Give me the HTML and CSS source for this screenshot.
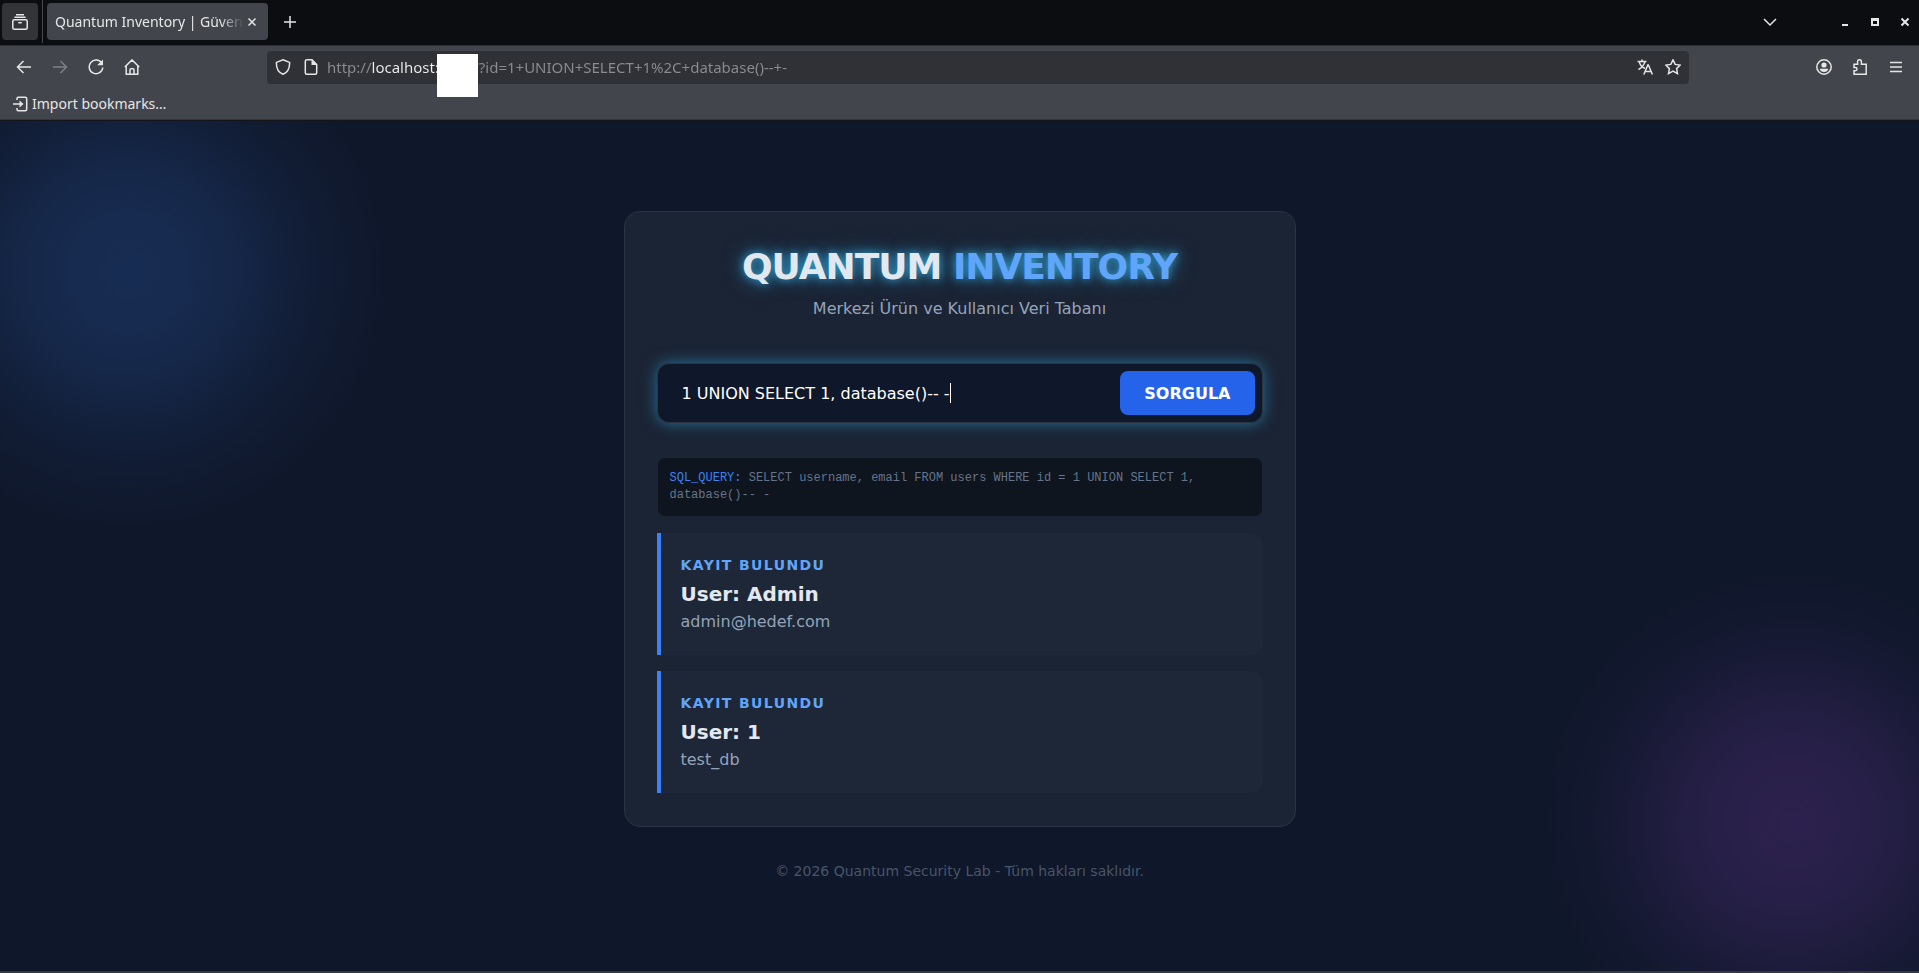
FILE: index.html
```html
<!DOCTYPE html>
<html lang="tr">
<head>
<meta charset="utf-8">
<meta name="viewport" content="width=device-width, initial-scale=1">
<title>Quantum Inventory | Güvenli</title>
<link rel="stylesheet" href="styles.css">
</head>
<body>
<div class="window">
  <header class="browser">
    <div class="tabstrip">
      <button class="recent" aria-label="Recent browsing">
        <svg class="icon" viewBox="0 0 16 16"><path d="M4 .8h8M2.4 3.3h11.2"/><rect x=".8" y="5.8" width="14.4" height="9.4" rx="1.5"/><path d="M6.2 8.7h3.6"/></svg>
      </button>
      <span class="divider"></span>
      <div class="tab">
        <span class="tab-title">Quantum Inventory | Güvenli</span>
        <button class="tab-close" aria-label="Close tab"><svg viewBox="0 0 10 10"><path d="M1.5 1.5l7 7M8.5 1.5l-7 7"/></svg></button>
      </div>
      <button class="icon-button new-tab" aria-label="New tab"><svg class="icon" viewBox="0 0 16 16"><path d="M8 2v12M2 8h12"/></svg></button>
      <div class="window-controls">
        <button class="icon-button tabs-menu" aria-label="List all tabs"><svg class="icon" viewBox="0 0 16 16"><path d="M2 5l6 6 6-6"/></svg></button>
        <button class="control" aria-label="Minimize"><svg viewBox="0 0 10 10"><path class="solid" d="M2 7h6v2H2z"/></svg></button>
        <button class="control" aria-label="Maximize"><svg viewBox="0 0 10 10"><path class="solid" fill-rule="evenodd" d="M1 1h8v8H1zM3 4v3h4V4z"/></svg></button>
        <button class="control" aria-label="Close"><svg viewBox="0 0 10 10"><path d="M1.5 1.5l7 7M8.5 1.5l-7 7"/></svg></button>
      </div>
    </div>
    <div class="toolbar">
      <nav class="nav-buttons" aria-label="Navigation">
        <button class="icon-button" aria-label="Back"><svg class="icon" viewBox="0 0 16 16"><path d="M15 8H1.5M7.5 2L1.5 8l6 6"/></svg></button>
        <button class="icon-button" aria-label="Forward" disabled><svg class="icon" viewBox="0 0 16 16"><path d="M1 8h13.5M8.500 2l6 6-6 6"/></svg></button>
        <button class="icon-button" aria-label="Reload"><svg class="icon" viewBox="0 0 16 16"><path d="M13.800 4.300A6.800 6.800 0 1 0 14.800 8.500"/><path class="solid" d="M15 .5v5.800H9.200z"/></svg></button>
        <button class="icon-button" aria-label="Home"><svg class="icon" viewBox="0 0 16 16"><path d="M.8 8L8 .9 15.200 8M2.200 7v8.200h11.600V7M6 15v-4.200q0-1 1-1h2q1 0 1 1V15"/></svg></button>
      </nav>
      <div class="address">
        <svg class="icon" viewBox="0 0 16 16"><path d="M8 .8l6.600 2.600C14.800 9 13 13.200 8 15.300 3 13.200 1.200 9 1.400 3.400z"/></svg>
        <svg class="icon" viewBox="0 0 16 16"><path d="M3.300.8h5.700l4.700 4.700v8.200q0 1.500-1.500 1.500H3.800q-1.500 0-1.500-1.500V2.300Q2.300.8 3.800.8z"/><path class="solid" d="M8.500 1v5H14z"/></svg>
        <div class="url">
          <input class="url-input" type="text" aria-label="Address" spellcheck="false" value="http://localhost:&#8199;&#8199;&#8199;&#8199;/?id=1+UNION+SELECT+1%2C+database()--+-">
          <span class="redaction"></span>
        </div>
        <svg class="icon" viewBox="0 0 16 16"><path d="M.5 2.500h9M5 .5v2M2.300 2.800C3 6 6 8.500 8 9.500M7.800 2.800C7 6.500 4 9 1.500 10.500M6.800 15.500l4-9.500h.6l4 9.500M8 12.500h6"/></svg>
        <svg class="icon" viewBox="0 0 16 16"><path d="M8 .9l2.200 4.500 5 .7-3.600 3.500.9 5L8 12.200l-4.500 2.400.9-5L.8 6.100l5-.7z"/></svg>
      </div>
      <div class="tools">
        <button class="icon-button" aria-label="Account"><svg class="icon" viewBox="0 0 16 16"><circle cx="8" cy="8" r="7.200"/><circle class="solid" cx="8" cy="6" r="2.600"/><path class="solid" d="M3.700 9.700h8.600c-.3 2-2 3.300-4.300 3.300s-4-1.300-4.300-3.300z"/></svg></button>
        <button class="icon-button" aria-label="Extensions"><svg class="icon" viewBox="0 0 16 16"><path d="M2 5.200h3.600V2.600a1.900 1.900 0 0 1 3.800 0v2.600h4.800v10H2v-3.400h1.300a1.700 1.700 0 0 0 0-3.400H2z"/></svg></button>
        <button class="icon-button" aria-label="Menu"><svg class="icon" viewBox="0 0 16 16"><path d="M2 3.500h12M2 8h12M2 12.500h12"/></svg></button>
      </div>
    </div>
    <div class="bookmarks">
      <button class="bookmark"><svg class="bookmark-icon" viewBox="0 0 16 16"><path d="M5 4V2.500Q5 1.300 6.200 1.300h7Q14.700 1.300 14.700 2.800v10.400q0 1.500-1.500 1.500h-7Q5 14.700 5 13.500V12M1 8h9"/><path class="solid" d="M7.500 4.500L11.500 8l-4 3.500z"/></svg>Import bookmarks…</button>
    </div>
  </header>

  <main class="page">
    <section class="card">
      <header class="hero">
        <h1 class="title">QUANTUM <span class="accent">INVENTORY</span></h1>
        <p class="subtitle">Merkezi Ürün ve Kullanıcı Veri Tabanı</p>
      </header>
      <form class="search">
        <input class="search-input" type="text" name="id" aria-label="ID" value="1 UNION SELECT 1, database()-- -">
        <button class="search-button" type="button">SORGULA</button>
      </form>
      <p class="query"><span class="query-label">SQL_QUERY:</span> SELECT username, email FROM users WHERE id = 1 UNION SELECT 1, database()-- -</p>
      <div class="records">
        <article class="record">
          <p class="record-label">KAYIT BULUNDU</p>
          <h2 class="record-name">User: Admin</h2>
          <p class="record-detail">admin@hedef.com</p>
        </article>
        <article class="record">
          <p class="record-label">KAYIT BULUNDU</p>
          <h2 class="record-name">User: 1</h2>
          <p class="record-detail">test_db</p>
        </article>
      </div>
    </section>
    <footer class="footer">© 2026 Quantum Security Lab - Tüm hakları saklıdır.</footer>
  </main>
</div>
</body>
</html>
```

FILE: styles.css
```css
*, *::before, *::after { box-sizing: border-box; }

body {
  margin: 0;
  background: #0f172a;
  font-family: "DejaVu Sans", sans-serif;
}

h1, h2, p { margin: 0; }

button, input {
  font: inherit;
  color: inherit;
  border: 0;
  padding: 0;
  background: none;
  outline: none;
}

svg {
  display: block;
  flex: none;
  fill: none;
  stroke: currentColor;
  stroke-width: 1.5;
}

svg .solid { fill: currentColor; stroke: none; }

.window {
  min-height: 100vh;
  display: flex;
  flex-direction: column;
}

/* Browser chrome */
.browser {
  background: #43454c;
  color: #e6e6e6;
  font: 14px/20px "Noto Sans", sans-serif;
  border-bottom: 1px solid #141519;
}

.tabstrip {
  display: flex;
  align-items: center;
  height: 46px;
  padding: 0 0 2px 2px;
  background: #0c0d11;
  border-bottom: 1px solid #2c2d32;
}

.recent {
  display: grid;
  place-items: center;
  width: 36px;
  height: 37px;
  border-radius: 4px;
  background: #333437;
}

.icon { width: 16px; height: 16px; }

.divider {
  width: 1px;
  height: 43px;
  margin: 0 4px;
  background: #48494d;
}

.tab {
  display: flex;
  align-items: center;
  width: 221px;
  height: 37px;
  padding: 0 8px;
  border-radius: 4px;
  background: #43454c;
}

.tab-title {
  flex: 1;
  min-width: 0;
  white-space: nowrap;
  mask-image: linear-gradient(to left, transparent, #000 24px);
}

.tab-close {
  display: grid;
  place-items: center;
  width: 16px;
}

.tab-close svg, .control svg { width: 10px; height: 10px; }

.icon-button {
  display: grid;
  place-items: center;
  width: 36px;
  height: 32px;
}

.icon-button:disabled { color: #7e8084; }

.new-tab { margin-left: 4px; }

.window-controls {
  display: flex;
  align-items: center;
  margin-left: auto;
}

.tabs-menu { margin-right: 42px; }

.control {
  display: grid;
  place-items: center;
  width: 30px;
  height: 30px;
}

.control svg { stroke-width: 2; }

.window-controls .control:last-child { width: 29px; }

.toolbar {
  display: grid;
  grid-template-columns: 267px 1fr 230px;
  align-items: center;
  height: 42px;
}

.nav-buttons { display: flex; padding-left: 6px; }

.address {
  display: flex;
  align-items: center;
  gap: 12px;
  height: 33px;
  padding: 0 8px;
  border-radius: 4px;
  background: #303136;
}

.url {
  position: relative;
  flex: 1;
  margin-left: -4px;
}

.url-input {
  display: block;
  width: 100%;
  height: 24px;
  font-size: 15px;
  color: transparent;
  background: linear-gradient(to right, #8b8c90 44px, #eeeeee 44px 113px, #8b8c90 113px);
  background-clip: text;
}

/* Covers the port number */
.redaction {
  position: absolute;
  left: 110px;
  top: -1px;
  width: 41px;
  height: 43px;
  background: #ffffff;
}

.tools {
  display: flex;
  justify-content: flex-end;
  padding-right: 5px;
}

.bookmarks {
  display: flex;
  align-items: center;
  height: 32px;
  padding-left: 12px;
  border-bottom: 1px solid #35363b;
}

.bookmark {
  display: flex;
  align-items: center;
  gap: 4px;
}

.bookmark-icon { width: 16px; height: 16px; }

/* Page */
.page {
  flex: 1;
  display: flex;
  flex-direction: column;
  align-items: center;
  padding: 90px 16px 24px;
  border-bottom: 2px solid #36373b;
  background:
    radial-gradient(circle at 128px 151px, rgb(59 130 246 / 20%), rgb(59 130 246 / 18%) 60px, rgb(59 130 246 / 14%) 110px, rgb(59 130 246 / 8%) 160px, rgb(59 130 246 / 3%) 210px, transparent 265px),
    radial-gradient(circle at calc(100% - 127px) calc(100% - 149px), rgb(168 75 230 / 19%), rgb(168 75 230 / 17%) 60px, rgb(168 75 230 / 13%) 110px, rgb(168 75 230 / 7%) 160px, rgb(168 75 230 / 2%) 210px, transparent 265px),
    #0f172a;
}

.card {
  width: 100%;
  max-width: 672px;
  padding: 33px 32px;
  border: 1px solid #2b3445;
  border-radius: 16px;
  background: #1b2435;
}

.hero {
  margin-bottom: 42px;
  text-align: center;
}

.title {
  margin-bottom: 8px;
  font-size: 36px;
  line-height: 44px;
  letter-spacing: -1px;
  color: #e2e8f0;
  text-shadow: 0 0 10px rgb(56 189 248 / 80%), 0 0 20px rgb(56 189 248 / 50%);
}

.accent { color: #60a5fa; }

.subtitle {
  font-size: 16px;
  line-height: 24px;
  color: #94a3b8;
}

.search {
  display: flex;
  padding: 7px;
  margin-bottom: 34px;
  border: 1px solid #2b3445;
  border-radius: 12px;
  background: #0f172a;
  box-shadow: 0 0 15px rgb(56 189 248 / 50%);
}

.search-input {
  flex: 1;
  min-width: 0;
  padding: 0 17px;
  font-size: 16px;
  color: #ffffff;
  background: linear-gradient(#ffffff, #ffffff) 285px 50% / 1px 20px no-repeat;
}

.search-button {
  height: 44px;
  padding: 0 24px;
  border-radius: 8px;
  background: #2563eb;
  font-size: 16px;
  font-weight: bold;
  color: #ffffff;
}

.query {
  padding: 12px;
  margin-bottom: 16px;
  border: 1px solid #1b2536;
  border-radius: 8px;
  background: #0f151f;
  font: 12px/17px "Liberation Mono", monospace;
  color: #64748b;
}

.query-label { color: #3b82f6; }

.records {
  display: grid;
  gap: 16px;
}

.record {
  padding: 20px 20px 21px;
  border-left: 4px solid #3b82f6;
  border-radius: 0 12px 12px 0;
  background: #1d2738;
}

.record-label {
  font-size: 14px;
  font-weight: bold;
  line-height: 24px;
  letter-spacing: 0.1em;
  color: #60a5fa;
}

.record-name {
  margin-top: 1px;
  font-size: 20px;
  line-height: 32px;
  color: #e2e8f0;
}

.record-detail {
  font-size: 16px;
  line-height: 24px;
  color: #94a3b8;
}

.footer {
  margin-top: 34px;
  font-size: 14px;
  line-height: 20px;
  color: #475569;
}
```
